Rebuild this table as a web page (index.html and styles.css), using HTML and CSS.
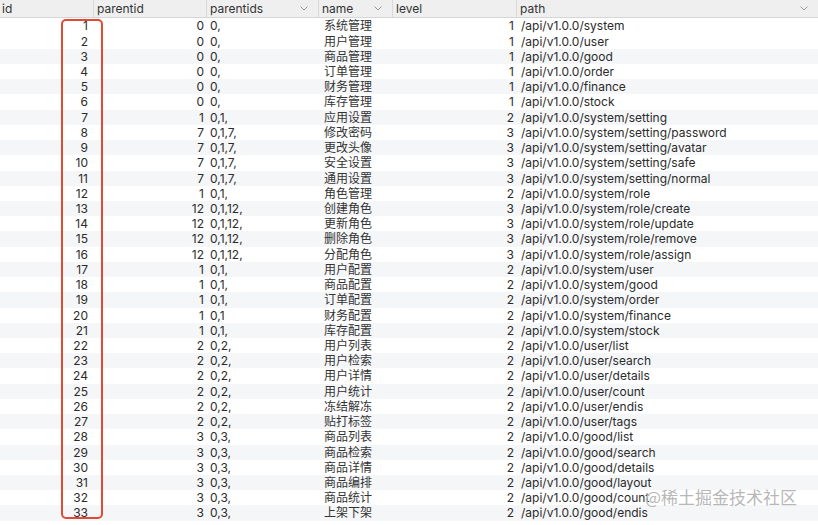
FILE: index.html
```html
<!DOCTYPE html>
<html>
<head>
<meta charset="utf-8">
<link rel="stylesheet" href="styles.css">
</head>
<body>
<div class="grid">
  <div class="head">
    <div class="hc c-id">id</div>
    <div class="hc sep">parentid</div>
    <div class="hc sep">parentids<svg class="chev" viewBox="0 0 8 5"><polyline points="0.5,0.5 4,4 7.5,0.5"/></svg></div>
    <div class="hc sep">name<svg class="chev" viewBox="0 0 8 5"><polyline points="0.5,0.5 4,4 7.5,0.5"/></svg></div>
    <div class="hc sep">level</div>
    <div class="hc sep">path<svg class="chev" viewBox="0 0 8 5"><polyline points="0.5,0.5 4,4 7.5,0.5"/></svg></div>
  </div>
  <div class="body">
    <div class="row"><span class="n id">1</span><span class="n">0</span><span class="t">0,</span><span class="t nm">系统管理</span><span class="n">1</span><span class="t">/api/v1.0.0/system</span></div>
    <div class="row"><span class="n id">2</span><span class="n">0</span><span class="t">0,</span><span class="t nm">用户管理</span><span class="n">1</span><span class="t">/api/v1.0.0/user</span></div>
    <div class="row"><span class="n id">3</span><span class="n">0</span><span class="t">0,</span><span class="t nm">商品管理</span><span class="n">1</span><span class="t">/api/v1.0.0/good</span></div>
    <div class="row"><span class="n id">4</span><span class="n">0</span><span class="t">0,</span><span class="t nm">订单管理</span><span class="n">1</span><span class="t">/api/v1.0.0/order</span></div>
    <div class="row"><span class="n id">5</span><span class="n">0</span><span class="t">0,</span><span class="t nm">财务管理</span><span class="n">1</span><span class="t">/api/v1.0.0/finance</span></div>
    <div class="row"><span class="n id">6</span><span class="n">0</span><span class="t">0,</span><span class="t nm">库存管理</span><span class="n">1</span><span class="t">/api/v1.0.0/stock</span></div>
    <div class="row"><span class="n id">7</span><span class="n">1</span><span class="t">0,1,</span><span class="t nm">应用设置</span><span class="n">2</span><span class="t">/api/v1.0.0/system/setting</span></div>
    <div class="row"><span class="n id">8</span><span class="n">7</span><span class="t">0,1,7,</span><span class="t nm">修改密码</span><span class="n">3</span><span class="t">/api/v1.0.0/system/setting/password</span></div>
    <div class="row"><span class="n id">9</span><span class="n">7</span><span class="t">0,1,7,</span><span class="t nm">更改头像</span><span class="n">3</span><span class="t">/api/v1.0.0/system/setting/avatar</span></div>
    <div class="row"><span class="n id">10</span><span class="n">7</span><span class="t">0,1,7,</span><span class="t nm">安全设置</span><span class="n">3</span><span class="t">/api/v1.0.0/system/setting/safe</span></div>
    <div class="row"><span class="n id">11</span><span class="n">7</span><span class="t">0,1,7,</span><span class="t nm">通用设置</span><span class="n">3</span><span class="t">/api/v1.0.0/system/setting/normal</span></div>
    <div class="row"><span class="n id">12</span><span class="n">1</span><span class="t">0,1,</span><span class="t nm">角色管理</span><span class="n">2</span><span class="t">/api/v1.0.0/system/role</span></div>
    <div class="row"><span class="n id">13</span><span class="n">12</span><span class="t">0,1,12,</span><span class="t nm">创建角色</span><span class="n">3</span><span class="t">/api/v1.0.0/system/role/create</span></div>
    <div class="row"><span class="n id">14</span><span class="n">12</span><span class="t">0,1,12,</span><span class="t nm">更新角色</span><span class="n">3</span><span class="t">/api/v1.0.0/system/role/update</span></div>
    <div class="row"><span class="n id">15</span><span class="n">12</span><span class="t">0,1,12,</span><span class="t nm">删除角色</span><span class="n">3</span><span class="t">/api/v1.0.0/system/role/remove</span></div>
    <div class="row"><span class="n id">16</span><span class="n">12</span><span class="t">0,1,12,</span><span class="t nm">分配角色</span><span class="n">3</span><span class="t">/api/v1.0.0/system/role/assign</span></div>
    <div class="row"><span class="n id">17</span><span class="n">1</span><span class="t">0,1,</span><span class="t nm">用户配置</span><span class="n">2</span><span class="t">/api/v1.0.0/system/user</span></div>
    <div class="row"><span class="n id">18</span><span class="n">1</span><span class="t">0,1,</span><span class="t nm">商品配置</span><span class="n">2</span><span class="t">/api/v1.0.0/system/good</span></div>
    <div class="row"><span class="n id">19</span><span class="n">1</span><span class="t">0,1,</span><span class="t nm">订单配置</span><span class="n">2</span><span class="t">/api/v1.0.0/system/order</span></div>
    <div class="row"><span class="n id">20</span><span class="n">1</span><span class="t">0,1</span><span class="t nm">财务配置</span><span class="n">2</span><span class="t">/api/v1.0.0/system/finance</span></div>
    <div class="row"><span class="n id">21</span><span class="n">1</span><span class="t">0,1,</span><span class="t nm">库存配置</span><span class="n">2</span><span class="t">/api/v1.0.0/system/stock</span></div>
    <div class="row"><span class="n id">22</span><span class="n">2</span><span class="t">0,2,</span><span class="t nm">用户列表</span><span class="n">2</span><span class="t">/api/v1.0.0/user/list</span></div>
    <div class="row"><span class="n id">23</span><span class="n">2</span><span class="t">0,2,</span><span class="t nm">用户检索</span><span class="n">2</span><span class="t">/api/v1.0.0/user/search</span></div>
    <div class="row"><span class="n id">24</span><span class="n">2</span><span class="t">0,2,</span><span class="t nm">用户详情</span><span class="n">2</span><span class="t">/api/v1.0.0/user/details</span></div>
    <div class="row"><span class="n id">25</span><span class="n">2</span><span class="t">0,2,</span><span class="t nm">用户统计</span><span class="n">2</span><span class="t">/api/v1.0.0/user/count</span></div>
    <div class="row"><span class="n id">26</span><span class="n">2</span><span class="t">0,2,</span><span class="t nm">冻结解冻</span><span class="n">2</span><span class="t">/api/v1.0.0/user/endis</span></div>
    <div class="row"><span class="n id">27</span><span class="n">2</span><span class="t">0,2,</span><span class="t nm">贴打标签</span><span class="n">2</span><span class="t">/api/v1.0.0/user/tags</span></div>
    <div class="row"><span class="n id">28</span><span class="n">3</span><span class="t">0,3,</span><span class="t nm">商品列表</span><span class="n">2</span><span class="t">/api/v1.0.0/good/list</span></div>
    <div class="row"><span class="n id">29</span><span class="n">3</span><span class="t">0,3,</span><span class="t nm">商品检索</span><span class="n">2</span><span class="t">/api/v1.0.0/good/search</span></div>
    <div class="row"><span class="n id">30</span><span class="n">3</span><span class="t">0,3,</span><span class="t nm">商品详情</span><span class="n">2</span><span class="t">/api/v1.0.0/good/details</span></div>
    <div class="row"><span class="n id">31</span><span class="n">3</span><span class="t">0,3,</span><span class="t nm">商品编排</span><span class="n">2</span><span class="t">/api/v1.0.0/good/layout</span></div>
    <div class="row"><span class="n id">32</span><span class="n">3</span><span class="t">0,3,</span><span class="t nm">商品统计</span><span class="n">2</span><span class="t">/api/v1.0.0/good/count</span></div>
    <div class="row"><span class="n id">33</span><span class="n">3</span><span class="t">0,3,</span><span class="t nm">上架下架</span><span class="n">2</span><span class="t">/api/v1.0.0/good/endis</span></div>
  </div>
  <div class="highlight"></div>
  <div class="watermark">@稀土掘金技术社区</div>
</div>
</body>
</html>
```

FILE: styles.css
```css
html, body {
  margin: 0;
  padding: 0;
  background: #ffffff;
}
body {
  font-family: Inter, "Noto Sans CJK SC", sans-serif;
  font-size: 12px;
  color: #2b2b2b;
  width: 818px;
  height: 525px;
  overflow: hidden;
}
.grid {
  position: relative;
  width: 818px;
  height: 525px;
}
.head, .row {
  display: grid;
  grid-template-columns: 93px 113px 112px 74px 124px 1fr;
}
.head {
  height: 17.4px;
  background: #efefef;
  border-bottom: 1px solid #d6d6d6;
  color: #333;
}
.hc {
  display: flex;
  align-items: center;
  justify-content: space-between;
  padding: 0 10px 0 3px;
  line-height: 16px;
}
.c-id {
  padding-left: 2px;
}
.sep {
  border-left: 1px solid #d9d9d9;
}
.chev {
  width: 8px;
  height: 5px;
  fill: none;
  stroke: #9a9a9a;
  stroke-width: 1;
}
.row {
  height: 15.22px;
  line-height: 15.22px;
  white-space: nowrap;
}
.row:nth-child(odd) {
  background: #f5f6f8;
}
.row:first-child {
  background: #ffffff;
}
.n {
  text-align: right;
  padding-right: 2px;
}
.n.id {
  padding-right: 5px;
}
.t {
  padding-left: 4px;
}
.nm {
  padding-left: 6px;
  color: #333;
}
.row .t:last-child {
  padding-left: 5px;
}
.highlight {
  position: absolute;
  left: 61px;
  top: 19px;
  width: 38px;
  height: 496px;
  border: 2px solid #e34a33;
  border-radius: 5px;
}
.watermark {
  position: absolute;
  left: 645px;
  top: 486px;
  font-family: "Noto Sans CJK SC", sans-serif;
  font-size: 17px;
  line-height: 22px;
  color: #b8b8b8;
  text-shadow: 0 0 1px #ffffff;
}
```
